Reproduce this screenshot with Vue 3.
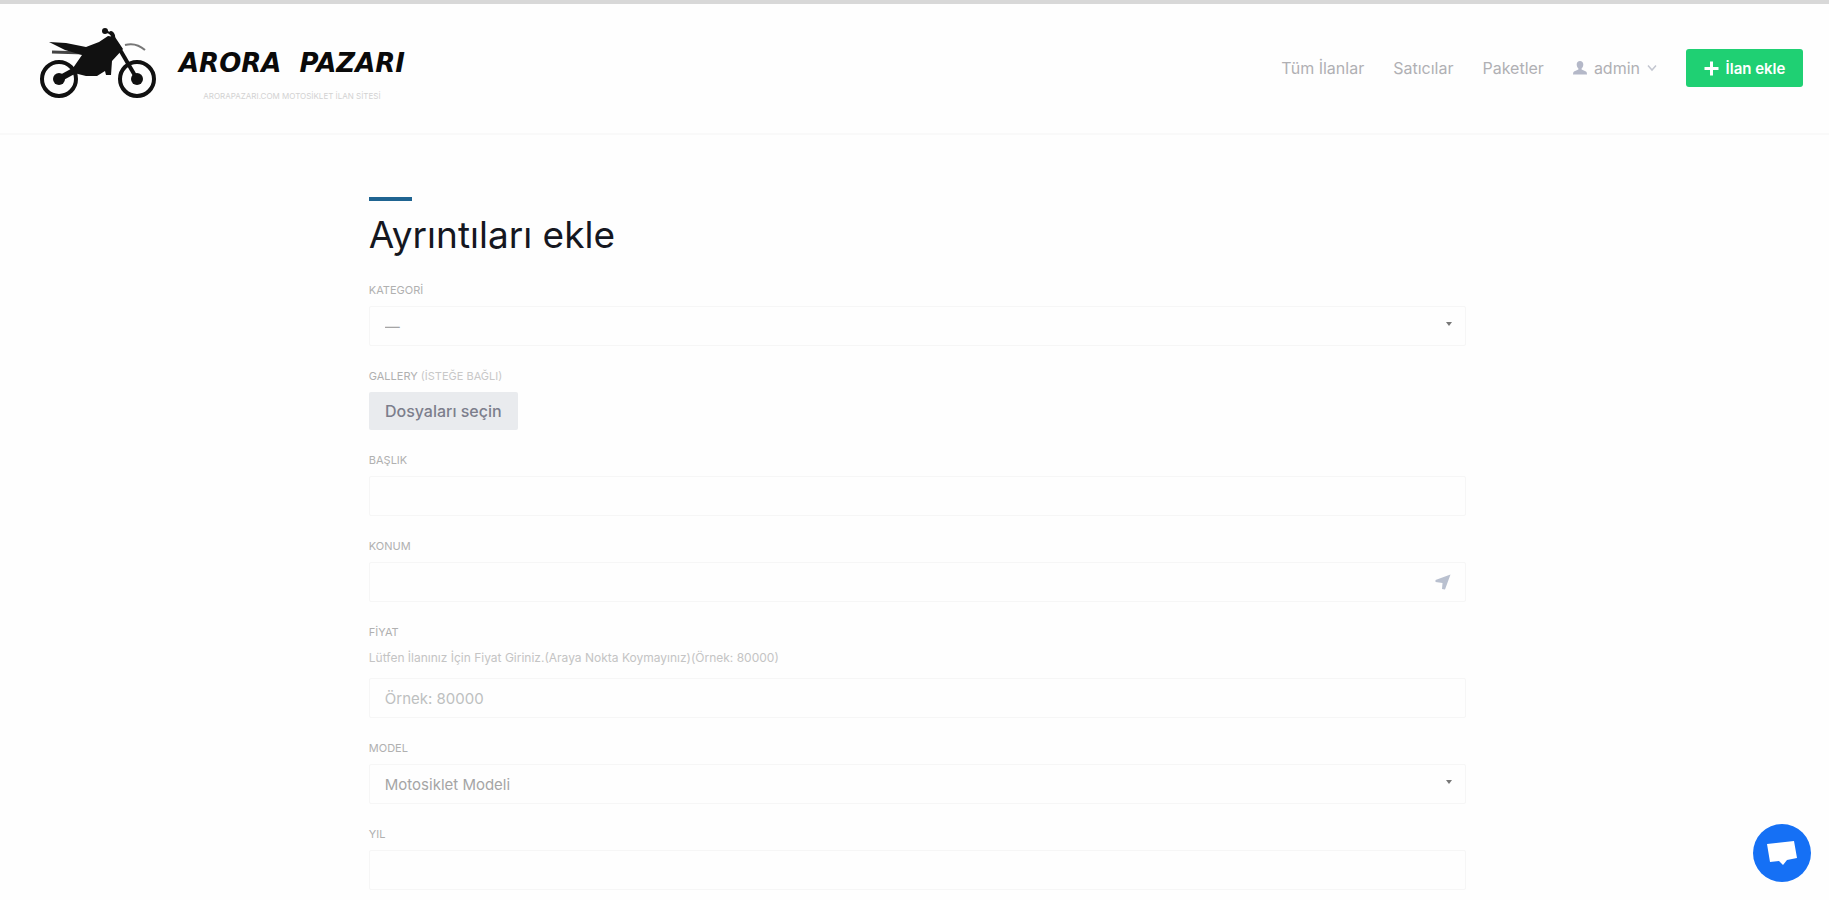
<script setup>
import { ref } from 'vue'

const links = ['Tüm İlanlar', 'Satıcılar', 'Paketler']

const category = ref('')
const title = ref('')
const place = ref('')
const price = ref('')
const model = ref('')
const year = ref('')
const fileInput = ref(null)

function pickFiles() {
    fileInput.value.click()
}
</script>

<template>
    <header class="site-header">
        <a href="#" class="logo">
            <svg class="bike" viewBox="0 0 120 72" aria-hidden="true">
                <g fill="none" stroke="#111">
                    <circle cx="20" cy="51" r="17" stroke-width="4" />
                    <circle cx="98" cy="51" r="17" stroke-width="4" />
                    <path d="M20 51 L40 40" stroke-width="6" />
                    <path d="M80 20 L98 51" stroke-width="4" />
                    <path d="M72 5 Q75 7 74 12" stroke-width="4" stroke-linecap="round" />
                    <path d="M66 3 L73 6" stroke-width="2" />
                    <path d="M86 17 Q97 14 106 22" stroke="#777" stroke-width="2" />
                    <path d="M13 24 L46 25" stroke="#444" stroke-width="3" />
                </g>
                <circle cx="66" cy="3" r="3" fill="#111" />
                <circle cx="20" cy="51" r="6" fill="#111" />
                <circle cx="98" cy="51" r="6" fill="#111" />
                <path d="M10 14 L27 15 L47 19 L60 14 L69 8 L76 9 L84 21 L73 33 L72 47 L67 47 L66 43 L58 48 L47 48 L35 45 L34 40 L43 27 L26 22 Z" fill="#111" />
            </svg>
            <span class="brand">
                <span class="name">ARORA&nbsp; PAZARI</span>
                <span class="tagline">ARORAPAZARI.COM MOTOSİKLET İLAN SİTESİ</span>
            </span>
        </a>
        <nav class="menu">
            <a v-for="link in links" :key="link" href="#">{{ link }}</a>
            <a href="#" class="user">
                <svg width="14" height="14" viewBox="0 0 14 14" aria-hidden="true">
                    <path d="M7 0 C9 0 10.300 1.500 10.300 3.500 C10.300 5.500 9.400 6.800 8.600 7.400 L8.600 8.600 L13 10.600 Q14 11.200 14 13.500 L0 13.500 Q0 11.200 1 10.600 L5.400 8.600 L5.400 7.400 C4.600 6.800 3.700 5.500 3.700 3.500 C3.700 1.500 5 0 7 0 Z" fill="#b4b8c8" />
                </svg>
                admin
                <svg width="10" height="8" viewBox="0 0 10 8" aria-hidden="true">
                    <path d="M1 1.500 L5 6 L9 1.500" fill="none" stroke="#c3c6d0" stroke-width="1.500" />
                </svg>
            </a>
            <button type="button" class="add">
                <svg width="15" height="15" viewBox="0 0 15 15" aria-hidden="true">
                    <path d="M7.500 0.500 V14.500 M0.500 7.500 H14.500" stroke="#fff" stroke-width="3" />
                </svg>
                İlan ekle
            </button>
        </nav>
    </header>

    <main class="content">
        <h1>Ayrıntıları ekle</h1>
        <form @submit.prevent>
            <div class="field">
                <label for="category">KATEGORİ</label>
                <div class="control">
                    <select id="category" v-model="category">
                        <option value="">—</option>
                    </select>
                    <span class="arrow"></span>
                </div>
            </div>
            <div class="field">
                <label for="gallery">GALLERY <small>(İSTEĞE BAĞLI)</small></label>
                <button type="button" class="files" @click="pickFiles">Dosyaları seçin</button>
                <input id="gallery" ref="fileInput" type="file" multiple hidden>
            </div>
            <div class="field">
                <label for="title">BAŞLIK</label>
                <input id="title" v-model="title" type="text">
            </div>
            <div class="field">
                <label for="place">KONUM</label>
                <div class="control">
                    <input id="place" v-model="place" type="text">
                    <svg class="locate" width="16" height="16" viewBox="0 0 16 16" aria-hidden="true">
                        <path d="M15.500 0.500 L10 15.500 L7 15 L7.500 9 L0.500 8 L0.500 6 Z" fill="#b9c0cf" />
                    </svg>
                </div>
            </div>
            <div class="field">
                <label for="price">FİYAT</label>
                <p class="hint">Lütfen İlanınız İçin Fiyat Giriniz.(Araya Nokta Koymayınız)(Örnek: 80000)</p>
                <input id="price" v-model="price" type="text" placeholder="Örnek: 80000">
            </div>
            <div class="field">
                <label for="model">MODEL</label>
                <div class="control">
                    <select id="model" v-model="model">
                        <option value="">Motosiklet Modeli</option>
                    </select>
                    <span class="arrow"></span>
                </div>
            </div>
            <div class="field">
                <label for="year">YIL</label>
                <input id="year" v-model="year" type="text">
            </div>
        </form>
    </main>

    <button type="button" class="chat" aria-label="Chat">
        <svg width="30" height="26" viewBox="0 0 30 26" aria-hidden="true">
            <path d="M0 4 L27 1 L30 18 L20 20 L16 25 L12 21 L3 22 Z" fill="#fff" />
        </svg>
    </button>
</template>

<style>
body {
    margin: 0;
    background: #fefefe;
    overflow: hidden;
}
</style>

<style scoped>
.site-header,
.content,
input,
select,
button {
    font-family: Inter, "Open Sans", sans-serif;
}

.site-header {
    display: flex;
    justify-content: space-between;
    box-sizing: border-box;
    height: 135px;
    padding: 0 26px 0 39px;
    border-top: 4px solid #d8d8d8;
    border-bottom: 2px solid #f9f9f9;
}

.logo {
    display: flex;
    align-items: flex-start;
    gap: 20px;
    padding-top: 24px;
    text-decoration: none;
}

.bike {
    width: 120px;
    height: 72px;
}

.brand {
    display: flex;
    flex-direction: column;
    align-items: center;
    gap: 12px;
    padding-top: 20px;
}

.name {
    font: italic bold 26px/30px "DejaVu Sans", sans-serif;
    color: #0a0a0a;
}

.tagline {
    font-size: 8px;
    line-height: 12px;
    color: #d2d2d2;
}

.menu {
    display: flex;
    align-items: center;
    gap: 29px;
    height: 128px;
}

.menu a {
    font-size: 16px;
    color: #b0b0b4;
    text-decoration: none;
}

.menu .user {
    display: flex;
    align-items: center;
    gap: 7px;
}

.add {
    display: flex;
    align-items: center;
    justify-content: center;
    gap: 7px;
    width: 117px;
    height: 38px;
    padding: 0;
    border: 0;
    border-radius: 3px;
    background: #1fd073;
    color: #fff;
    font-size: 15px;
    font-weight: 600;
}

.content {
    width: 60%;
    margin-left: calc(20% + 3px);
    padding: 62px 0 10px;
}

h1 {
    margin: 0 0 15px;
    font-size: 37px;
    line-height: 60px;
    font-weight: 400;
    color: #15171f;
}

h1::before {
    content: "";
    display: block;
    width: 43px;
    height: 4px;
    margin-bottom: 4px;
    background: #1f6491;
}

form {
    display: flex;
    flex-direction: column;
    gap: 20px;
}

.field {
    display: flex;
    flex-direction: column;
    align-items: flex-start;
}

label {
    margin-bottom: 6px;
    font-size: 11px;
    line-height: 20px;
    color: #b0b0b0;
}

label small {
    font-size: 11px;
    color: #c8c8c8;
}

.control {
    position: relative;
    width: 100%;
}

input,
select {
    display: block;
    box-sizing: border-box;
    width: 100%;
    height: 40px;
    padding: 0 15px;
    border: 1px solid #f6f6f6;
    border-radius: 2px;
    background: #fefefe;
    color: #a5a5a5;
    font-size: 15px;
    appearance: none;
    outline: none;
}

input[hidden] {
    display: none;
}

input::placeholder {
    color: #bdc0c0;
    opacity: 1;
}

.arrow {
    position: absolute;
    top: 16px;
    right: 14px;
    border: 3px solid transparent;
    border-top: 4px solid #777;
    border-bottom: 0;
}

.locate {
    position: absolute;
    top: 12px;
    right: 15px;
}

.files {
    width: 149px;
    height: 38px;
    padding: 0;
    border: 0;
    border-radius: 2px;
    background: #e9ebee;
    color: #7c7e8c;
    font-size: 16px;
    font-weight: 500;
}

.hint {
    margin: 0 0 10px;
    font-size: 12px;
    line-height: 20px;
    color: #c4c4c4;
}

.chat {
    position: fixed;
    right: 18px;
    bottom: 18px;
    display: flex;
    align-items: center;
    justify-content: center;
    width: 58px;
    height: 58px;
    padding: 0;
    border: 0;
    border-radius: 50%;
    background: #1570f5;
}
</style>
